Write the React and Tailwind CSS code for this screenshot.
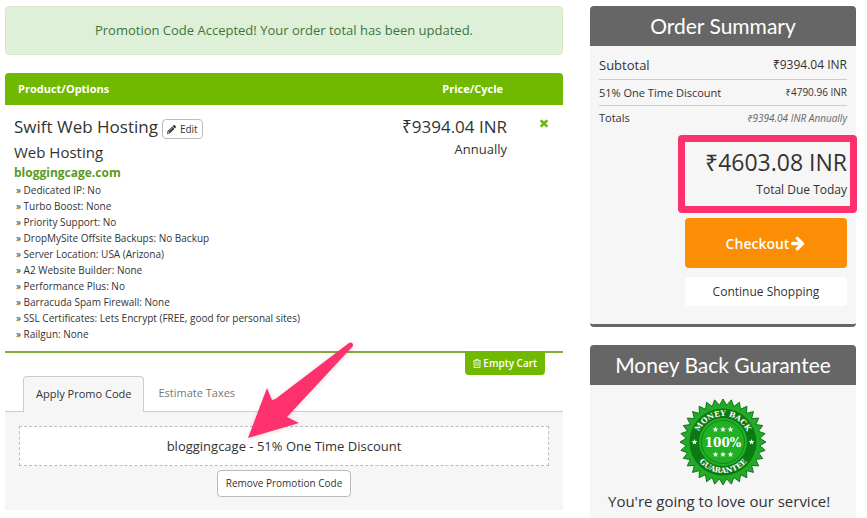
import React from 'react';
import { FaPencilAlt, FaRegTrashAlt } from 'react-icons/fa';

const options = [
  'Dedicated IP: No',
  'Turbo Boost: None',
  'Priority Support: No',
  'DropMySite Offsite Backups: No Backup',
  'Server Location: USA (Arizona)',
  'A2 Website Builder: None',
  'Performance Plus: No',
  'Barracuda Spam Firewall: None',
  'SSL Certificates: Lets Encrypt (FREE, good for personal sites)',
  'Railgun: None',
];

// zig-zag outline of the seal
const sealPoints = Array.from({ length: 64 }, (_, i) => {
  const r = i % 2 === 0 ? 43 : 37;
  const a = (i * Math.PI) / 32 - Math.PI / 2;
  return `${(45 + r * Math.cos(a)).toFixed(2)},${(45 + r * Math.sin(a)).toFixed(2)}`;
}).join(' ');

const starPoints = (cx, cy, size) =>
  Array.from({ length: 10 }, (_, i) => {
    const r = i % 2 === 0 ? size : size * 0.45;
    const a = (i * Math.PI) / 5 - Math.PI / 2;
    return `${(cx + r * Math.cos(a)).toFixed(2)},${(cy + r * Math.sin(a)).toFixed(2)}`;
  }).join(' ');

const stars = [
  [37.5, 32.5],
  [45, 32.5],
  [52.5, 32.5],
  [37.5, 57.5],
  [45, 57.5],
  [52.5, 57.5],
  [16.5, 45],
  [73.5, 45],
];

const ArrowIcon = () => (
  <svg viewBox="0 0 1792 1792" className="h-4 w-4" fill="currentColor" aria-hidden="true">
    <path d="M1600 960q0 54-37 91l-651 651q-39 37-91 37-51 0-90-37l-75-75q-38-38-38-91t38-91l293-293h-704q-52 0-84.5-37.5t-32.5-90.5v-128q0-53 32.5-90.5t84.5-37.5h704l-293-294q-38-36-38-90t38-90l75-75q38-38 90-38 53 0 91 38l651 651q37 35 37 90z" />
  </svg>
);

const CrossIcon = () => (
  <svg viewBox="0 0 1792 1792" className="h-3 w-3" fill="currentColor" aria-hidden="true">
    <path d="M1490 1322q0 40-28 68l-136 136q-28 28-68 28t-68-28l-294-294-294 294q-28 28-68 28t-68-28l-136-136q-28-28-28-68t28-68l294-294-294-294q-28-28-28-68t28-68l136-136q28-28 68-28t68 28l294 294 294-294q28-28 68-28t68 28l136 136q28 28 28 68t-28 68l-294 294 294 294q28 28 28 68z" />
  </svg>
);

const Seal = () => (
  <svg viewBox="0 0 90 90" className="mx-auto block h-[90px] w-[90px]" role="img" aria-label="100% money back guarantee">
    <defs>
      <path id="seal-top" d="M 19 45 A 26 26 0 0 1 71 45" />
      <path id="seal-bottom" d="M 14 45 A 31 31 0 0 0 76 45" />
    </defs>
    <polygon points={sealPoints} fill="#22ab25" stroke="#12731a" strokeWidth="1" />
    <circle cx="45" cy="45" r="33.5" fill="#0b7a14" />
    <circle cx="45" cy="45" r="24" fill="#22b125" />
    <circle cx="45" cy="45" r="21.5" fill="none" stroke="#0f8418" strokeWidth="1" />
    {stars.map(([x, y]) => (
      <polygon key={`${x}-${y}`} points={starPoints(x, y, 3)} fill="#fff" />
    ))}
    <g fill="#fff" fontFamily="'DejaVu Serif', serif" fontWeight="bold" textAnchor="middle">
      <text x="45" y="49.5" fontSize="12">100%</text>
      <text fontSize="7.5">
        <textPath href="#seal-top" startOffset="50%">MONEY BACK</textPath>
      </text>
      <text fontSize="7.5">
        <textPath href="#seal-bottom" startOffset="50%">GUARANTEE</textPath>
      </text>
    </g>
  </svg>
);

const PanelTitle = ({ children }) => (
  <h2 className="rounded-t bg-[#666] text-center font-['Lato',sans-serif] text-[21px] leading-10 text-white">{children}</h2>
);

const CartItem = () => (
  <section className="relative border-b-2 border-[#83aa38] pb-[9px]">
    <div className="flex px-[9px] pt-2">
      <div className="flex-1">
        <div className="flex items-center gap-1">
          <h3 className="text-[17px] leading-7">Swift Web Hosting</h3>
          <button type="button" className="mt-1 flex h-5 items-center gap-1 rounded-sm border border-[#bbb] bg-white px-1 text-[10px]">
            <FaPencilAlt className="h-[9px] w-[9px]" />
            Edit
          </button>
        </div>
        <p className="text-[15px] leading-[22px]">Web Hosting</p>
        <p className="text-xs leading-[19px] font-bold text-[#5b9a1b]">bloggingcage.com</p>
        <ul className="pl-[2px] text-[10px] leading-4">
          {options.map((o) => (
            <li key={o}>» {o}</li>
          ))}
        </ul>
      </div>
      <div className="text-right">
        <p className="text-[17px] leading-7">₹9394.04 INR</p>
        <p className="text-[13px] leading-4">Annually</p>
      </div>
      <button type="button" aria-label="Remove item" className="ml-[31px] h-5 w-4 text-[#6fb50a]">
        <CrossIcon />
      </button>
    </div>
    <button
      type="button"
      className="absolute top-full right-[18px] flex h-6 items-center gap-[2px] rounded-b bg-[#71b900] px-2 text-[10px] font-semibold text-white"
    >
      <FaRegTrashAlt className="h-[9px] w-[8px]" />
      Empty Cart
    </button>
  </section>
);

const PromoCode = () => (
  <section className="relative mt-[23px]">
    <div role="tablist" className="flex h-9 border-b border-[#ccc] pl-[18px] text-[11px]">
      <button type="button" role="tab" aria-selected="true" className="-mb-px rounded-t border border-b-0 border-[#ccc] bg-[#f6f6f6] px-3">
        Apply Promo Code
      </button>
      <button type="button" role="tab" aria-selected="false" className="px-[14px] text-[#777]">
        Estimate Taxes
      </button>
    </div>
    <div className="bg-[#f6f6f6] px-[14px] pt-[14px] pb-[13px] text-center">
      <p className="border border-dashed border-[#bbb] bg-white text-[13px] leading-[38px]">bloggingcage - 51% One Time Discount</p>
      <button type="button" className="mt-1 h-[27px] rounded-sm border border-[#bbb] bg-white px-2 text-[10px]">
        Remove Promotion Code
      </button>
    </div>
    <svg viewBox="0 0 110 102" className="absolute -top-[35px] left-[241px] h-[102px] w-[110px] drop-shadow-sm" aria-hidden="true">
      <path d="M103 2 Q107 0 107 5 L41 76 L53 82 L2 97 L21 47 L26 59 Q29 59 32 56 Z" fill="#fc316d" />
    </svg>
  </section>
);

const OrderSummary = () => (
  <aside>
    <section className="rounded border-b-[3px] border-[#666] bg-[#f6f6f6]">
      <PanelTitle>Order Summary</PanelTitle>
      <dl className="px-[9px] pt-[5px]">
        <div className="flex justify-between border-b border-[#ccc] text-[13px] leading-7">
          <dt>Subtotal</dt>
          <dd className="text-xs leading-7">₹9394.04 INR</dd>
        </div>
        <div className="flex justify-between border-b border-[#ccc] text-[10px] leading-[25px]">
          <dt className="text-[11px]">51% One Time Discount</dt>
          <dd>₹4790.96 INR</dd>
        </div>
        <div className="flex justify-between text-[10px] leading-6">
          <dt className="text-[11px]">Totals</dt>
          <dd className="text-[#666] italic">₹9394.04 INR Annually</dd>
        </div>
      </dl>
      <div className="-mr-px ml-auto w-[179px]">
        <div className="mt-[5px] rounded-sm border-[7px] border-[#fc316d] pt-[2px] pr-[3px] pb-[7px] text-right whitespace-nowrap">
          <p className="text-[23px] leading-9">₹4603.08 INR</p>
          <p className="text-xs leading-[19px]">Total Due Today</p>
        </div>
        <div className="pt-[5px] pr-[10px] pb-[18px] pl-[7px]">
          <button type="button" className="flex h-[50px] w-full items-center justify-center gap-px rounded bg-[#fc8e06] text-[14px] font-semibold text-white">
            Checkout
            <ArrowIcon />
          </button>
          <a href="#shop" className="mt-[9px] block rounded bg-white text-center text-xs leading-[29px]">
            Continue Shopping
          </a>
        </div>
      </div>
    </section>
    <section className="mt-[18px] bg-[#f6f6f6]">
      <PanelTitle>Money Back Guarantee</PanelTitle>
      <div className="px-[18px] pt-3">
        <Seal />
        <p className="mt-[2px] text-[15px] leading-6">
          You're going to love our service! If you don't like it, we offer a full refund.
        </p>
      </div>
    </section>
  </aside>
);

const App = () => (
  <div className="grid h-screen grid-cols-[558fr_266fr] gap-[27px] overflow-hidden bg-white pt-[6px] pr-[11px] pl-[5px] font-['Open_Sans','Noto_Sans',sans-serif] text-[#333]">
    <main>
      <p className="rounded border border-[#d6e9c6] bg-[#dff0d8] text-center text-[13px] leading-[47px] text-[#3c763d]">
        Promotion Code Accepted! Your order total has been updated.
      </p>
      <div className="mt-[18px] flex rounded-t bg-[#71b900] px-[13px] text-[11px] leading-8 font-bold text-white">
        <span className="flex-1">Product/Options</span>
        <span className="mr-[47px]">Price/Cycle</span>
      </div>
      <CartItem />
      <PromoCode />
    </main>
    <OrderSummary />
  </div>
);

export default App;
